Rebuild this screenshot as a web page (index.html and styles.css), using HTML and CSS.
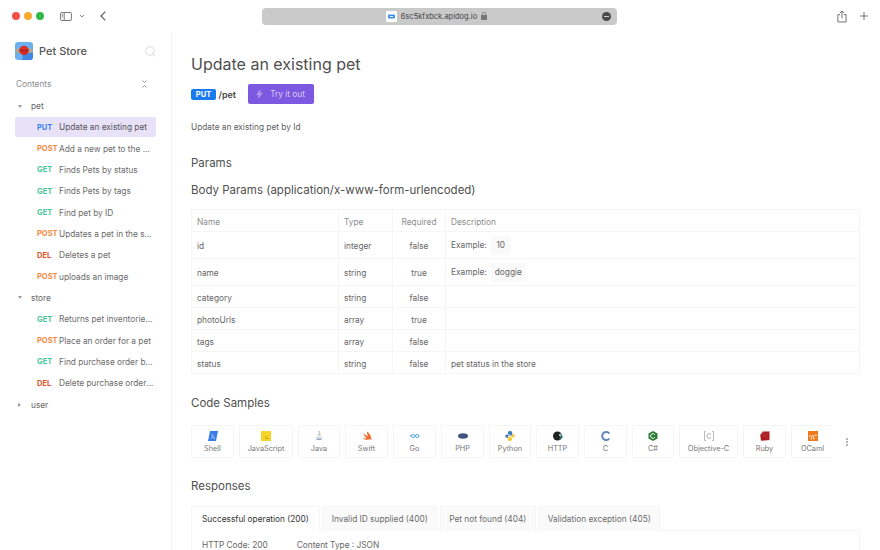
FILE: index.html
```html
<!DOCTYPE html>
<html lang="en">
<head>
<meta charset="utf-8">
<title>Update an existing pet</title>
<link rel="stylesheet" href="styles.css">
</head>
<body>
<header class="titlebar">
  <div class="lights"><i class="light red"></i><i class="light yellow"></i><i class="light green"></i></div>
  <svg class="tb-sidebar" width="12" height="9" viewBox="0 0 13 10"><rect x=".5" y=".5" width="12" height="9" rx="1.5" fill="none" stroke="#666"/><path d="M4.500 .5v9" stroke="#666"/><path d="M1.800 2.500h1.400M1.800 4h1.400M1.800 5.500h1.400" stroke="#666" stroke-width=".7"/></svg>
  <svg class="tb-chev" width="6" height="4" viewBox="0 0 6 4"><path d="M1 1l2 2 2-2" fill="none" stroke="#777" stroke-width=".9"/></svg>
  <svg class="tb-back" width="6" height="10" viewBox="0 0 6 10"><path d="M5.300 .7L1 5l4.300 4.300" fill="none" stroke="#555" stroke-width="1.100"/></svg>
  <div class="urlbar">
    <svg class="favicon" width="11" height="11" viewBox="0 0 11 11"><rect width="11" height="11" rx="1" fill="#fff"/><rect x="2" y="3.500" width="7" height="4" rx="1" fill="#3f8fe8"/><path d="M4 5.500h3" stroke="#fff"/></svg>
    <span class="url">6sc5kfxbck.apidog.io</span>
    <svg class="lock" width="6" height="8" viewBox="0 0 6 8"><rect y="3" width="6" height="5" rx=".7" fill="#777"/><path d="M1.200 3.200V2a1.800 1.800 0 0 1 3.600 0v1.200" fill="none" stroke="#777" stroke-width=".8"/></svg>
    <span class="url-more"><i></i></span>
  </div>
  <svg class="tb-share" width="10" height="13" viewBox="0 0 11 14"><path d="M3.500 5H1v8h9V5H7.500" fill="none" stroke="#666"/><path d="M5.500 9V1M3.300 3l2.200-2 2.200 2" fill="none" stroke="#666"/></svg>
  <svg class="tb-plus" width="8" height="8" viewBox="0 0 9 9"><path d="M4.500 0v9M0 4.500h9" stroke="#666"/></svg>
</header>
<div class="layout">
  <aside class="sidebar">
    <div class="brand">
      <svg class="logo" width="18" height="18" viewBox="0 0 18 18"><rect width="18" height="18" rx="3" fill="#6cb0f2"/><path d="M9 9l9 2v4a3 3 0 0 1-3 3H7z" fill="#3f88e0"/><ellipse cx="9" cy="8.500" rx="8" ry="2" fill="none" stroke="#e9a23b" stroke-width="1.200"/><circle cx="9" cy="8.500" r="4.700" fill="#d92b2b"/><path d="M4.500 8c2 1.200 7 1.200 9 0" fill="none" stroke="#8f1818" stroke-width=".8"/></svg>
      <span class="brand-name">Pet Store</span>
      <svg class="search" width="11" height="11" viewBox="0 0 11 11"><circle cx="5" cy="5" r="4.300" fill="none" stroke="#ddd"/><path d="M8 8l2.500 2.500" stroke="#ddd"/></svg>
    </div>
    <div class="contents"><span>Contents</span>
      <svg width="5" height="8" viewBox="0 0 5 8"><path d="M.5 .5l2 2 2-2M.5 7.500l2-2 2 2" fill="none" stroke="#888" stroke-width=".8"/></svg>
    </div>
    <nav class="tree">
      <div class="folder"><i class="caret down"></i>pet</div>
      <div class="item active"><b class="m put">PUT</b><span class="label">Update an existing pet</span></div>
      <div class="item"><b class="m post">POST</b><span class="label">Add a new pet to the store</span></div>
      <div class="item"><b class="m get">GET</b><span class="label">Finds Pets by status</span></div>
      <div class="item"><b class="m get">GET</b><span class="label">Finds Pets by tags</span></div>
      <div class="item"><b class="m get">GET</b><span class="label">Find pet by ID</span></div>
      <div class="item"><b class="m post">POST</b><span class="label">Updates a pet in the store</span></div>
      <div class="item"><b class="m del">DEL</b><span class="label">Deletes a pet</span></div>
      <div class="item"><b class="m post">POST</b><span class="label">uploads an image</span></div>
      <div class="folder"><i class="caret down"></i>store</div>
      <div class="item"><b class="m get">GET</b><span class="label">Returns pet inventories by status</span></div>
      <div class="item"><b class="m post">POST</b><span class="label">Place an order for a pet</span></div>
      <div class="item"><b class="m get">GET</b><span class="label">Find purchase order by ID</span></div>
      <div class="item"><b class="m del">DEL</b><span class="label">Delete purchase order by ID</span></div>
      <div class="folder"><i class="caret right"></i>user</div>
    </nav>
  </aside>
  <main class="main">
    <h1 class="title">Update an existing pet</h1>
    <div class="endpoint">
      <span class="badge">PUT</span><span class="path">/pet</span>
      <button class="try"><svg width="7" height="8" viewBox="0 0 7 8"><path d="M4 .5L1 4.500h2.500L2.500 7.500 6 3.300H3.500z" fill="none" stroke="#d9ccf8" stroke-width=".7"/></svg>Try it out</button>
    </div>
    <p class="desc">Update an existing pet by Id</p>
    <h2 class="h-params">Params</h2>
    <h2 class="h-body">Body Params (application/x-www-form-urlencoded)</h2>
    <table class="params">
      <colgroup><col class="c1"><col class="c2"><col class="c3"><col></colgroup>
      <thead><tr class="r-head"><th>Name</th><th>Type</th><th class="ctr">Required</th><th>Description</th></tr></thead>
      <tbody>
        <tr class="r-tall"><td>id</td><td>integer</td><td class="ctr">false</td><td>Example:<code>10</code></td></tr>
        <tr class="r-tall"><td>name</td><td>string</td><td class="ctr">true</td><td>Example:<code>doggie</code></td></tr>
        <tr class="r"><td>category</td><td>string</td><td class="ctr">false</td><td></td></tr>
        <tr class="r"><td>photoUrls</td><td>array</td><td class="ctr">true</td><td></td></tr>
        <tr class="r"><td>tags</td><td>array</td><td class="ctr">false</td><td></td></tr>
        <tr class="r"><td>status</td><td>string</td><td class="ctr">false</td><td>pet status in the store</td></tr>
      </tbody>
    </table>
    <h2 class="h-code">Code Samples</h2>
    <div class="samples">
      <div class="tiles">
        <div class="tile w43"><svg width="10" height="10" viewBox="0 0 10 10"><path d="M2 0h8l-2 10H0z" fill="#3b7de8"/><path d="M3.500 3l2 2-2.500 2M5 7h2" fill="none" stroke="#fff" stroke-width=".7"/></svg><span>Shell</span></div>
        <div class="tile w54"><svg width="10" height="10" viewBox="0 0 10 10"><rect width="10" height="10" fill="#f5d327"/><path d="M5 5v3M6.500 7.500h1.500" stroke="#a98f10" stroke-width=".8"/></svg><span>JavaScript</span></div>
        <div class="tile w42"><svg width="8" height="10" viewBox="0 0 8 10"><path d="M4 0c1 2-1 3 0 5M1 7h6M1.500 8.500h5" fill="none" stroke="#8f9cb8" stroke-width=".9"/><path d="M5.500 2.500C4.500 3.500 5 4.500 5.500 5" fill="none" stroke="#d9a17a" stroke-width=".7"/></svg><span>Java</span></div>
        <div class="tile w43"><svg width="10" height="10" viewBox="0 0 10 10"><path d="M1 2c2 2 4 3 5 3.500C5 3.500 5 2 5 .5c2 1.500 4 4 4 6 .5 1 .7 2 .5 2.500-.6-.8-1.500-.8-2.500-.5-2 .5-5 .5-6.500-2 1.500 1 3 1.200 4 .9C3 5.500 1.800 3.800 1 2z" fill="#f26a2e"/></svg><span>Swift</span></div>
        <div class="tile w43"><svg width="10" height="10" viewBox="0 0 10 10"><rect x="1.500" y="3.500" width="3.500" height="3" rx="1.500" fill="none" stroke="#4aa3dc"/><rect x="5.500" y="3.500" width="3.500" height="3" rx="1.500" fill="none" stroke="#4aa3dc"/><path d="M0 4.500h1" stroke="#4aa3dc"/></svg><span>Go</span></div>
        <div class="tile w43"><svg width="10" height="10" viewBox="0 0 10 10"><ellipse cx="5" cy="5" rx="5" ry="2.700" fill="#42557f"/></svg><span>PHP</span></div>
        <div class="tile w42"><svg width="10" height="10" viewBox="0 0 10 10"><path d="M5 0C3.300 0 3 .8 3 1.500V3h2.200v.5H2C1 3.500.3 4.200.3 5.300S1 7 2 7h.8V5.800c0-.8.600-1.400 1.400-1.400h2c.6 0 1-.5 1-1V1.500C7.200.7 6.500 0 5 0z" fill="#3d7cb3"/><path d="M5 10c1.700 0 2-.8 2-1.500V7H4.800v-.5H8c1 0 1.700-.7 1.700-1.800S9 3 8 3h-.8v1.200c0 .8-.6 1.400-1.400 1.400h-2c-.6 0-1 .5-1 1v1.900C2.800 9.300 3.500 10 5 10z" fill="#f4ca3c"/></svg><span>Python</span></div>
        <div class="tile w43"><svg width="10" height="10" viewBox="0 0 10 10"><circle cx="4.500" cy="5" r="4.500" fill="#222"/><path d="M6.500 1.500c2.500 1 3.200 3 3 5.500L6 9c.8-2 1.500-5 .5-7.500z" fill="#2f6f6f"/><path d="M6.200 3l3 1-3 1z" fill="#eee"/></svg><span>HTTP</span></div>
        <div class="tile w43"><svg width="10" height="10" viewBox="0 0 10 10"><path d="M8.300 2.500A4 4 0 1 0 8.300 7.500" fill="none" stroke="#6585bd" stroke-width="2"/></svg><span>C</span></div>
        <div class="tile w42"><svg width="10" height="10" viewBox="0 0 10 10"><path d="M5 0l4.500 2.500v5L5 10 .5 7.500v-5z" fill="#2c7a33"/><path d="M6.800 3.700a2.300 2.300 0 1 0 0 2.600" fill="none" stroke="#fff"/></svg><span>C#</span></div>
        <div class="tile w60"><svg width="10" height="10" viewBox="0 0 10 10"><path d="M2 .5H.5v9H2M8 .5h1.500v9H8" fill="none" stroke="#aaa" stroke-width=".8"/><path d="M6.800 3.300a2.300 2.300 0 1 0 0 3.400" fill="none" stroke="#aaa"/></svg><span>Objective-C</span></div>
        <div class="tile w43"><svg width="10" height="10" viewBox="0 0 10 10"><path d="M3 .5h6.500V9L1 9.800.2 4z" fill="#a81c22"/><path d="M3 .5L5 5l4.500 4M.2 4L5 5l4.500-4.500" fill="none" stroke="#d4525a" stroke-width=".4"/></svg><span>Ruby</span></div>
        <div class="tile w43"><svg width="10" height="10" viewBox="0 0 10 10"><rect width="10" height="10" fill="#ee7a1e"/><path d="M1 5.500c2-1.500 3 0 4.500-.5S8 3.500 9 4.500M3 8.500l1-2.500M6 8.500L5.500 6" fill="none" stroke="#fff" stroke-width=".9"/></svg><span>OCaml</span></div>
      </div>
      <svg class="more" width="2" height="8" viewBox="0 0 2 8"><circle cx="1" cy="1" r=".8" fill="#555"/><circle cx="1" cy="4" r=".8" fill="#555"/><circle cx="1" cy="7" r=".8" fill="#555"/></svg>
    </div>
    <h2 class="h-resp">Responses</h2>
    <div class="tabs">
      <div class="tab on">Successful operation (200)</div>
      <div class="tab">Invalid ID supplied (400)</div>
      <div class="tab">Pet not found (404)</div>
      <div class="tab">Validation exception (405)</div>
    </div>
    <div class="panel"><span>HTTP Code: 200</span><span>Content Type : JSON</span></div>
  </main>
</div>
</body>
</html>
```
FILE: styles.css
```css
* { box-sizing: border-box; }
html, body { margin: 0; height: 550px; overflow: hidden; }
body { background: #fff; font-family: Inter, "Liberation Sans", sans-serif; color: #555; font-size: 8.300px; }
svg { display: block; flex: none; }

.titlebar { height: 32px; display: flex; align-items: center; padding-left: 12px; }
.lights { display: flex; gap: 4px; }
.light { width: 8px; height: 8px; border-radius: 50%; }
.red { background: #f0524c; }
.yellow { background: #f4ab2e; }
.green { background: #33b84a; }
.tb-sidebar { margin-left: 16px; }
.tb-chev { margin-left: 7px; }
.tb-back { margin-left: 15px; }
.urlbar { margin-left: 156px; width: 355px; height: 17px; padding-right: 6px; background: #c9c9c9; border-radius: 4px; display: flex; align-items: center; justify-content: center; position: relative; font-size: 7.500px; color: #444; }
.favicon { margin-right: 4px; }
.lock { margin-left: 4px; }
.url-more { position: absolute; right: 6px; top: 4px; width: 9px; height: 9px; border-radius: 50%; background: #4a4a4a; display: flex; align-items: center; justify-content: center; }
.url-more i { width: 5px; height: 1px; background: #ccc; }
.tb-share { margin-left: 220px; }
.tb-plus { margin-left: 13px; }

.layout { display: flex; height: 518px; }
.sidebar { width: 172px; flex: none; border-right: 1px solid #f5f5f5; padding: 0 15px; }
.brand { height: 18px; margin-top: 10px; display: flex; align-items: center; }
.brand-name { margin-left: 6px; font-size: 11px; font-weight: 500; color: #555; }
.search { margin-left: auto; }
.contents { margin-top: 18px; height: 12px; padding-left: 1px; padding-right: 9px; display: flex; align-items: center; justify-content: space-between; color: #8c8c8c; font-size: 8.300px; }
.tree { margin-top: 6px; display: flex; flex-direction: column; gap: 1.330px; }
.folder { height: 20px; display: flex; align-items: center; color: #666; padding-left: 16px; position: relative; }
.caret { position: absolute; width: 0; height: 0; }
.caret.down { left: 3px; top: 8.500px; border-left: 2px solid transparent; border-right: 2px solid transparent; border-top: 3px solid #999; }
.caret.right { left: 3px; top: 8px; border-top: 2px solid transparent; border-bottom: 2px solid transparent; border-left: 3px solid #999; }
.item { height: 20px; flex: none; padding-left: 22px; display: flex; align-items: center; border-radius: 2px; color: #6b6b6b; }
.item.active { background: #e8e2f9; color: #555; }
.m { width: 22px; flex: none; font-size: 7.500px; font-weight: 700; }
.put { color: #3b82f0; }
.post { color: #f58a3f; }
.get { color: #48c79a; }
.del { color: #e5532d; }
.label { width: 95px; overflow: hidden; white-space: nowrap; text-overflow: ellipsis; }

.main { flex: 1; min-width: 0; padding: 0 20px 0 19px; overflow: hidden; }
.title { margin: 20px 0 0; font-size: 16px; line-height: 24px; font-weight: 400; color: #4f4f4f; }
.endpoint { margin-top: 8px; height: 20px; display: flex; align-items: center; }
.badge { width: 25px; height: 11px; border-radius: 2px; background: #1a7af0; color: #fff; font-size: 7.500px; font-weight: 700; display: flex; align-items: center; justify-content: center; }
.path { margin-left: 2.500px; font-size: 9px; font-weight: 600; color: #4a4a4a; }
.try { margin-left: 11.500px; width: 66px; height: 20px; border: 0; border-radius: 2px; background: #7d58e0; color: #d9ccf8; font: 8.300px Inter, "Liberation Sans", sans-serif; display: flex; align-items: center; justify-content: center; gap: 7px; padding: 0; }
.desc { margin: 18px 0 0; line-height: 11px; color: #5f5f5f; }
h2 { margin: 0; font-weight: 400; font-size: 11.500px; line-height: 16px; color: #4f4f4f; }
.h-params { margin-top: 22px; }
.h-body { margin-top: 11px; }
.params { margin-top: 11px; width: 100%; border-collapse: collapse; table-layout: fixed; color: #666; }
.c1 { width: 147px; }
.c2 { width: 54px; }
.c3 { width: 53px; }
th, td { border: 1px solid #f5f5f5; padding: 2px 5px 0; text-align: left; font-weight: 400; }
th { color: #8c8c8c; }
.params .ctr { text-align: center; }
.r-head { height: 22px; }
.r-tall { height: 27px; }
.r-tall td { padding-top: 1px; }
.r { height: 22px; }
code { display: inline-block; min-width: 20px; margin-left: 4px; padding: 0 4px; text-align: center; border-radius: 2px; background: #f9f9f9; font: 8.300px/19px Inter, "Liberation Sans", sans-serif; }
.h-code { margin-top: 21px; }
.samples { margin-top: 14px; display: flex; align-items: center; }
.tiles { width: 641px; overflow: hidden; display: flex; gap: 5px; flex: none; }
.tile { height: 33px; flex: none; border: 1px solid #f5f5f5; border-radius: 2px; display: flex; flex-direction: column; align-items: center; justify-content: center; gap: 3px; font-size: 7.300px; color: #777; }
.tile svg { height: 10px; }
.w42 { width: 42px; }
.w43 { width: 43px; }
.w54 { width: 54px; }
.w60 { width: 59px; }
.more { margin-left: 14px; }
.h-resp { margin-top: 20px; }
.tabs { margin-top: 12px; display: flex; gap: 2.500px; }
.tab { height: 25px; padding: 0 8.500px; display: flex; align-items: center; background: #fafafa; border: 1px solid #f5f5f5; border-bottom: 0; border-radius: 2px 2px 0 0; color: #6b6b6b; white-space: nowrap; position: relative; }
.tab.on { padding: 0 10px; background: #fff; color: #333; }
.panel { border: 1px solid #f5f5f5; margin-top: -1px; height: 40px; padding: 9px 0 0 10px; display: flex; gap: 29px; color: #666; }
```
